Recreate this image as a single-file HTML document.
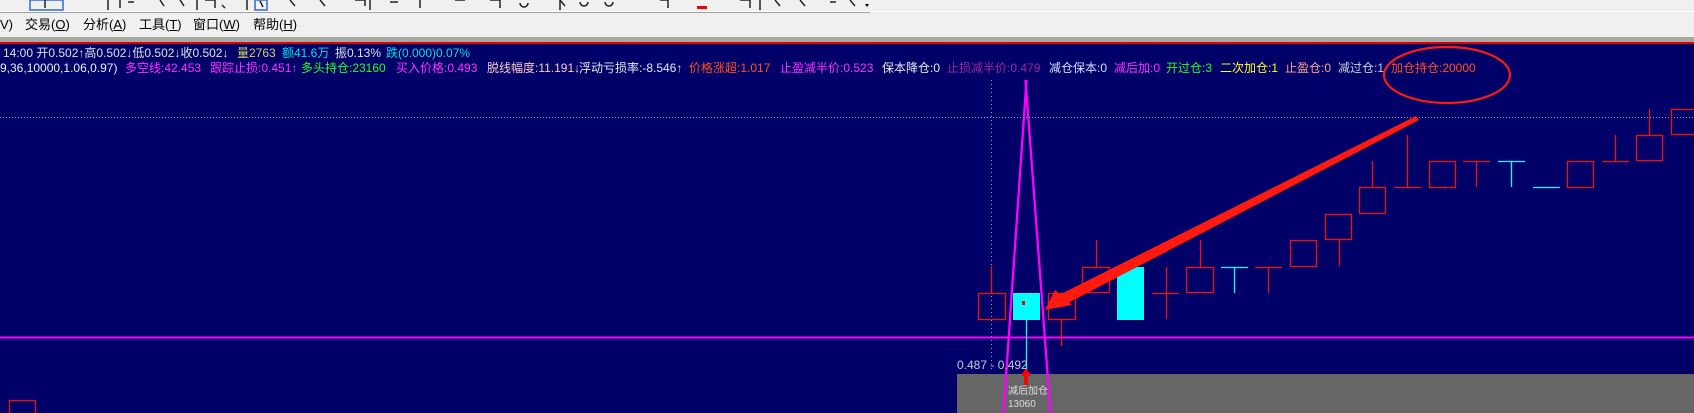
<!DOCTYPE html>
<html><head><meta charset="utf-8"><style>
*{margin:0;padding:0}
body{width:1694px;height:413px;overflow:hidden;background:#000068;position:relative;font-family:"Liberation Sans","Noto Sans CJK SC",sans-serif}
.t{position:absolute;white-space:nowrap;font-size:12px;line-height:14px}
.m{position:absolute;white-space:nowrap;font-size:13px;line-height:16px;color:#000;top:17px}
</style></head><body>
<div style="position:absolute;left:0;top:0;width:1694px;height:43px;background:#f0f0f0"></div>
<div style="position:absolute;left:0;top:11px;width:1694px;height:1px;background:#fff"></div>
<div style="position:absolute;left:0;top:12px;width:870px;height:1px;background:#a0a0a0"></div>
<div style="position:absolute;left:0;top:37px;width:1694px;height:5px;background:#a8a8a8"></div>
<div style="position:absolute;left:0;top:42px;width:1694px;height:2px;background:#e00000"></div>
<svg style="position:absolute;left:0;top:0" width="880" height="12">
<g stroke="#222" stroke-width="1.5" fill="none">
<rect x="30" y="0" width="33" height="10" stroke="#2a6fd0"/>
<path d="M45 0v8M120 0v8M128 2h6M160 0l4 6M180 0l4 6M205 0h10v8M222 5l3 3"/>
<path d="M108 0v10M197 0v10M247 0v10M370 0v10M560 0v10M760 0v10"/>
<rect x="255" y="0" width="12" height="10" stroke="#2a6fd0"/>
<path d="M260 1l3 6M290 0l5 6M320 0l5 6M355 0h10v6M390 2h8M420 0v8M455 0h10M490 0h10v8M520 3a4 4 0 1 0 8 0M560 0l5 6M580 2a4 4 0 1 0 8 0M605 2a4 4 0 1 0 8 0M660 0h8v8M740 0h10v8M775 0l5 6M800 0l5 6M830 2h6M850 0l5 6"/>
</g>
<rect x="697" y="6" width="10" height="3" fill="#e00"/>
<path d="M865 4l4 0l-2 3z" fill="#000"/>
</svg>
<div class="m" style="left:0">V)</div>
<div class="m" style="left:25px">交易(<u>O</u>)</div>
<div class="m" style="left:83px">分析(<u>A</u>)</div>
<div class="m" style="left:139px">工具(<u>T</u>)</div>
<div class="m" style="left:193px">窗口(<u>W</u>)</div>
<div class="m" style="left:253px">帮助(<u>H</u>)</div>

<svg style="position:absolute;left:0;top:0" width="1694" height="413">
<line x1="0" y1="117.5" x2="1694" y2="117.5" stroke="#a0a0b0" stroke-dasharray="1 2"/>
<line x1="991.5" y1="80" x2="991.5" y2="372" stroke="#a0a0b0" stroke-dasharray="1 3"/>
<line x1="0" y1="337.5" x2="1694" y2="337.5" stroke="#ff00ff" stroke-width="2"/>
<rect x="957" y="374" width="737" height="39" fill="#666"/>
<g fill="none" stroke="#f01010" stroke-width="1.3">
<rect x="9.5" y="400.5" width="26" height="20"/>
<rect x="978.5" y="293.5" width="27" height="26"/><path d="M991.5 266v27"/>
<rect x="1048.5" y="293.5" width="27" height="26"/><path d="M1061.5 320v26"/>
<rect x="1082.5" y="267.5" width="27" height="25"/><path d="M1096.5 240v27"/>
<path d="M1152 293.5h27M1166.5 267v52"/>
<rect x="1186.5" y="267.5" width="27" height="25"/><path d="M1200.5 240v27"/>
<path d="M1255 267.5h27M1268.5 267v26"/>
<rect x="1290.5" y="240.5" width="26" height="26"/>
<rect x="1325.5" y="214.5" width="26" height="25"/><path d="M1339.5 240v26"/>
<rect x="1359.5" y="187.5" width="26" height="26"/><path d="M1372.5 161v26"/>
<path d="M1394 187.5h27M1407.5 135v52"/>
<rect x="1429.5" y="161.5" width="26" height="26"/>
<path d="M1463 161.5h27M1476.5 161v26"/>
<rect x="1567.5" y="161.5" width="26" height="26"/>
<path d="M1602 161.5h27M1615.5 135v26"/>
<rect x="1636.5" y="135.5" width="26" height="25"/><path d="M1649.5 109v26"/>
<rect x="1671.5" y="109.5" width="26" height="25"/>
</g>
<g stroke="#00ffff" stroke-width="1.3" fill="none">
<path d="M1026.5 320v50"/>
<path d="M1221 267.5h27M1234.5 267v26"/>
<path d="M1498 161.5h27M1511.5 161v26"/>
<path d="M1533 187.5h27"/>
</g>
<rect x="1013" y="293" width="27" height="27" fill="#00ffff"/>
<rect x="1117" y="267" width="27" height="53" fill="#00ffff"/>
<g stroke="#ff00ff" stroke-width="1.3">
<line x1="1026" y1="80" x2="1003" y2="413"/>
<line x1="1026" y1="80" x2="1051" y2="413"/>
<line x1="1027" y1="80" x2="1004" y2="413"/>
<line x1="1025" y1="80" x2="1050" y2="413"/>
</g>
<path d="M1022 301h3v4h-3z" fill="#f00"/>
<path d="M1026 368l-5 8h3v9h4v-9h3z" fill="#f00"/>
<polygon points="1416,116 1419,120 1066,304 1057,296" fill="#ff1a10"/>
<polygon points="1045,310 1055,290 1072,305" fill="#ff1a10"/>
<ellipse cx="1447" cy="75" rx="63" ry="28" fill="none" stroke="#ff1a10" stroke-width="2.2"/>
</svg>
<div class="t" style="left:957px;top:358px;color:#c8c8d0">0.487 - 0.492</div>
<div class="t" style="left:1008px;top:386px;color:#ddd;font-size:10px;line-height:12px">减后加仓</div>
<div class="t" style="left:1008px;top:399px;color:#ddd;font-size:10px;line-height:12px">13060</div>

<div class="t" style="left:3px;top:46px;color:#e0e0e0">14:00 开0.502↑高0.502↓低0.502↓收0.502↓</div>
<div class="t" style="left:237px;top:46px;color:#d0d060">量2763</div>
<div class="t" style="left:282px;top:46px;color:#00e0e0">额41.6万</div>
<div class="t" style="left:335px;top:46px;color:#e0e0e0">振0.13%</div>
<div class="t" style="left:386px;top:46px;color:#00e0e0">跌(0.000)0.07%</div>

<div class="t" style="left:0;top:61px;color:#f0f0f0">9,36,10000,1.06,0.97)</div>
<div class="t" style="left:125px;top:61px;color:#ff30ff">多空线:42.453</div>
<div class="t" style="left:210px;top:61px;color:#ff30ff">跟踪止损:0.451↑</div>
<div class="t" style="left:301px;top:61px;color:#20ff20">多头持仓:23160</div>
<div class="t" style="left:396px;top:61px;color:#ff30ff">买入价格:0.493</div>
<div class="t" style="left:487px;top:61px;color:#ffc8c8">脱线幅度:11.191↓</div>
<div class="t" style="left:579px;top:61px;color:#e8e8f0">浮动亏损率:-8.546↑</div>
<div class="t" style="left:689px;top:61px;color:#ff5020">价格涨超:1.017</div>
<div class="t" style="left:780px;top:61px;color:#ff30ff">止盈减半价:0.523</div>
<div class="t" style="left:882px;top:61px;color:#e8e8f0">保本降仓:0</div>
<div class="t" style="left:947px;top:61px;color:#9a2aa0">止损减半价:0.479</div>
<div class="t" style="left:1049px;top:61px;color:#d8e0ff">减仓保本:0</div>
<div class="t" style="left:1114px;top:61px;color:#ff30ff">减后加:0</div>
<div class="t" style="left:1166px;top:61px;color:#20ff20">开过仓:3</div>
<div class="t" style="left:1220px;top:61px;color:#ffff20">二次加仓:1</div>
<div class="t" style="left:1285px;top:61px;color:#ffa090">止盈仓:0</div>
<div class="t" style="left:1338px;top:61px;color:#d0d0d8">减过仓:1</div>
<div class="t" style="left:1391px;top:61px;color:#ff5020">加仓持仓:20000</div>
</body></html>
